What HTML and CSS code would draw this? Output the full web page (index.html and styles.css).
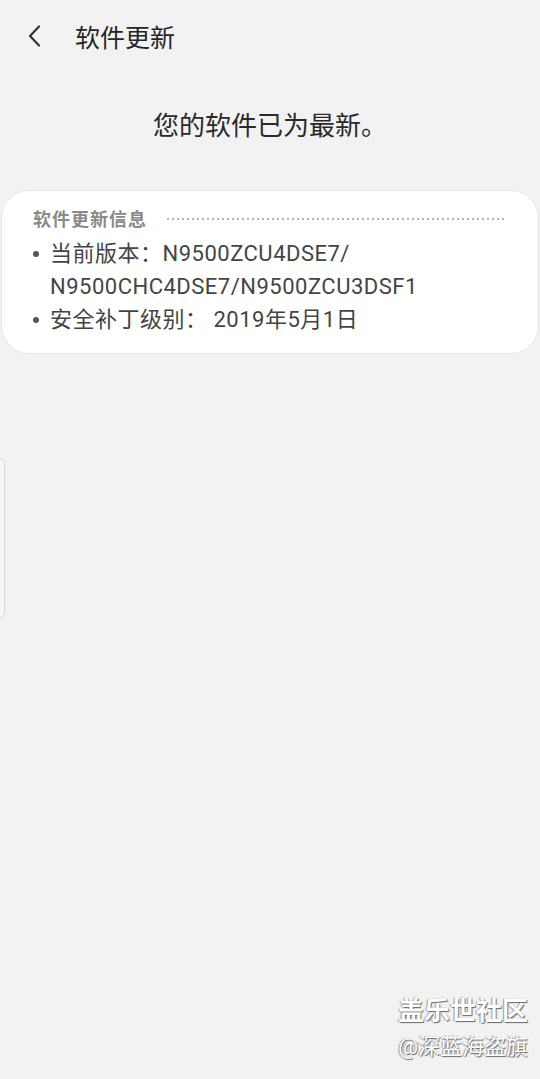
FILE: index.html
```html
<!DOCTYPE html>
<html>
	<head>
		<meta charset="UTF-8">
		<title>软件更新</title>
		<link rel="stylesheet" href="styles.css">
	</head>
	<body>
		<div class="top">
			<svg class="back" width="16" height="24" viewBox="0 0 16 24">
				<path d="M12 2.5 L3 12 L12 21.5" fill="none" stroke="#333" stroke-width="2.2" stroke-linecap="round" stroke-linejoin="round"/>
			</svg>
			<span class="title">软件更新</span>
		</div>
		<div class="status">您的软件已为最新。</div>
		<div class="card">
			<div class="card-head">
				<span>软件更新信息</span>
				<i class="dots"></i>
			</div>
			<ul class="info">
				<li>当前版本：N9500ZCU4DSE7/<br>N9500CHC4DSE7/N9500ZCU3DSF1</li>
				<li>安全补丁级别： 2019年5月1日</li>
			</ul>
		</div>
		<div class="handle"></div>
		<div class="mark">
			<div class="mark1">盖乐世社区</div>
			<div class="mark2">@深蓝海盗旗</div>
		</div>
	</body>
</html>
```
FILE: styles.css
```css
*{
	margin: 0;
	padding: 0;
	box-sizing: border-box;
}
html,body{
	height: 100%;
}
body{
	background: #f2f2f2;
	font-family: Roboto, "Noto Sans CJK SC", sans-serif;
	color: #333;
	position: relative;
	overflow: hidden;
}
ul,li{
	list-style: none;
}
.top{
	height: 76px;
	display: flex;
	align-items: center;
	padding-left: 27px;
	padding-bottom: 4px;
}
.back{
	display: block;
}
.title{
	margin-left: 32px;
	font-size: 25px;
	color: #262626;
}
.status{
	text-align: center;
	font-size: 26px;
	color: #2a2a2a;
	padding-top: 29px;
	height: 114px;
}
.card{
	margin: 0 1px;
	background: #fff;
	border: 1px solid #e6e6e6;
	border-radius: 28px;
	padding: 14px 32px 17px 30px;
}
.card-head{
	display: flex;
	align-items: center;
	font-size: 18px;
	letter-spacing: 1px;
	font-weight: bold;
	color: #8a8a8a;
	height: 26px;
	padding-left: 1px;
}
.dots{
	flex: 1;
	height: 2px;
	margin-left: 20px;
	margin-top: 1px;
	background: repeating-linear-gradient(to right, #b5b5b5 0, #b5b5b5 2px, transparent 2px, transparent 5px);
}
.info{
	font-size: 22px;
	letter-spacing: 0.5px;
	line-height: 33px;
	color: #444;
	margin-top: 6px;
}
.info li{
	position: relative;
	padding-left: 18px;
}
.info li:before{
	content: "";
	position: absolute;
	left: 1px;
	top: 14px;
	width: 6px;
	height: 6px;
	border-radius: 50%;
	background: #555;
}
.handle{
	position: absolute;
	left: -6px;
	top: 458px;
	width: 11px;
	height: 160px;
	border: 1px solid #d6d6d6;
	border-radius: 6px;
	background: #f7f7f7;
}
.mark{
	position: absolute;
	right: 12px;
	top: 994px;
	text-align: right;
	color: #fff;
	font-weight: bold;
	text-shadow: 1px 1px 1px #666, -1px 0 1px #999;
}
.mark1{
	font-size: 26px;
	line-height: 34px;
}
.mark2{
	font-size: 22px;
	line-height: 30px;
	margin-top: 4px;
	font-weight: normal;
}
```
